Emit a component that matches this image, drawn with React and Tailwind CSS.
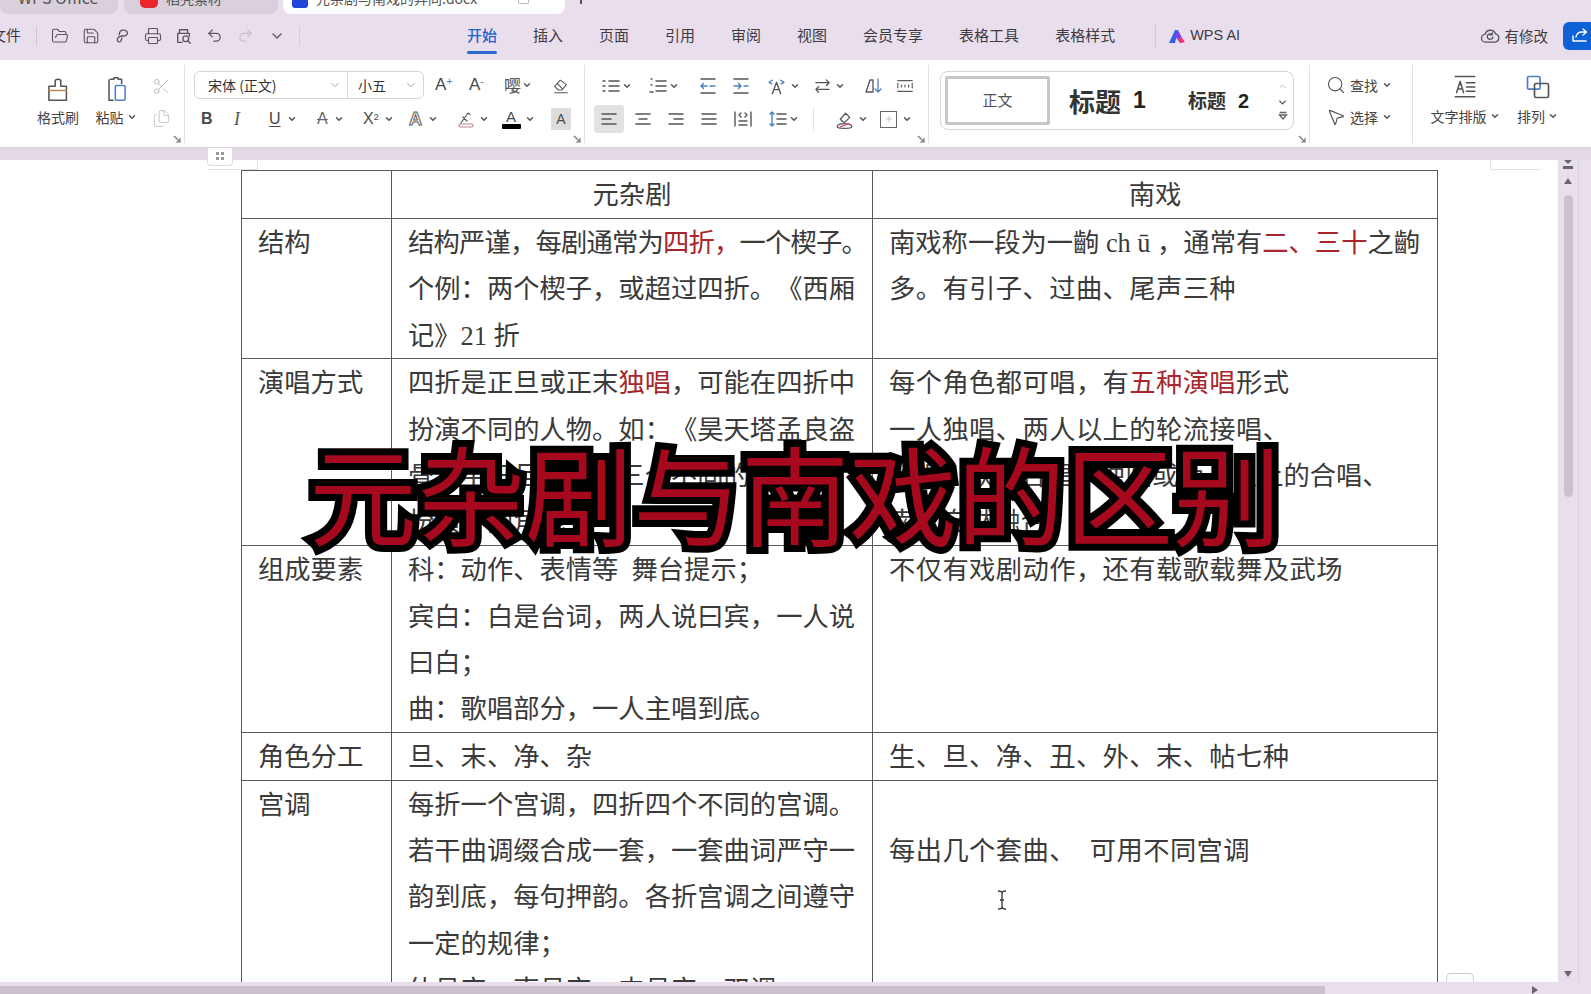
import React from "react";
import { ChevronDown, ChevronUp, FolderOpen, Save, Printer, Undo2, Redo2, Search, MousePointer2, Scissors, Files, Plus } from "lucide-react";

const Caret = ({ className = "ml-[3px]" }) => <ChevronDown size={10} strokeWidth={3.5} className={`${className} text-[#555] shrink-0`} />;

const Svg = ({ size = 20, children, stroke = "#555", sw = 1.4, className = "" }) => (
  <svg width={size} height={size} viewBox="0 0 20 20" fill="none" stroke={stroke} strokeWidth={sw} strokeLinecap="round" strokeLinejoin="round" className={className}>{children}</svg>
);

const Lines = ({ rows }) => (
  <Svg size={20} sw={1.5}>{rows.map(([a, b, y], i) => <path key={i} d={`M${a} ${y}H${b}`} />)}</Svg>
);

const Slot = ({ w, children }) => <div className={`flex items-center h-[24px] shrink-0 ${w}`}>{children}</div>;

const Launcher = () => (
  <svg width="8" height="8" viewBox="0 0 8 8" className="absolute right-[3px] bottom-[4px]" fill="none" stroke="#777" strokeWidth="1.2"><path d="M1 1l5.5 5.5M7 3v4H3" /></svg>
);

const Sep = () => <div className="w-px h-[78px] bg-[#e2e2e2] self-center" />;

const Red = ({ children }) => <span className="text-[#a8262c]">{children}</span>;

const Line = ({ children, t = "" }) => <div className={`whitespace-nowrap h-[46.4px] pt-[2px] leading-[46.4px] ${t}`}>{children}</div>;

const Cell = ({ children, center }) => (
  <td className={`border-[1.5px] border-[#5a5a5a] p-0 align-top overflow-hidden ${center ? "text-center" : "pl-[16px]"}`}>{children}</td>
);

const MenuIcon = ({ children }) => <div className="w-[31px] flex justify-center text-[#5b5560]">{children}</div>;

function TitleBar() {
  return (
    <div className="h-[17px] shrink-0 flex items-end overflow-hidden pb-[3px] gap-[6px] text-[#555]">
      <div className="w-[118px] h-[24px] -mt-[10px] bg-[#d9d0db] rounded-b-[8px] flex items-end pl-[18px] text-[16px] leading-none">
        <span className="-translate-y-[9px]">WPS Office</span>
      </div>
      <div className="w-[154px] h-[24px] bg-[#d9d0db] rounded-b-[8px] flex items-end pl-[16px] text-[14px] leading-none gap-[8px]">
        <div className="w-[18px] h-[8px] mb-[6px] bg-[#e8262c] rounded-b-[5px]" />
        <span className="-translate-y-[9px]">稻壳素材</span>
      </div>
      <div className="w-[282px] h-[24px] ml-[-1px] bg-white rounded-b-[8px] flex items-end pl-[9px] text-[14px] leading-none gap-[8px] pr-[36px]">
        <div className="w-[16px] h-[8px] mb-[6px] bg-[#1f45d8] rounded-b-[3px]" />
        <span className="-translate-y-[9px] grow">元杂剧与南戏的异同.docx</span>
        <div className="w-[11px] h-[4px] mb-[10px] border border-[#bbb] border-t-0 rounded-b-[2px]" />
      </div>
      <div className="w-[2px] h-[6px] ml-[9px] mb-[10px] bg-[#555]" />
    </div>
  );
}

function MenuBar() {
  return (
    <div className="h-[43px] shrink-0 flex items-center pb-[6px] text-[15px] text-[#3f3a42] relative">
      <span className="ml-[-9px] w-[36px]">文件</span>
      <div className="w-px h-[20px] bg-[#cfc6d2] ml-[9px] mr-[7px]" />
      <MenuIcon><FolderOpen size={18} strokeWidth={1.5} /></MenuIcon>
      <MenuIcon><Save size={18} strokeWidth={1.5} /></MenuIcon>
      <MenuIcon>
        <Svg size={18} stroke="#5b5560" sw={1.5}><path d="M7 8.5c0-3 1.5-5 4.500-5s4.500 1.500 4.500 3.200-1.500 3.300-5 3.300c-3 0-5 .8-6 3-.8 2 .3 3.500 1.800 3.500S9.500 15 9.800 12.500" /></Svg>
      </MenuIcon>
      <MenuIcon><Printer size={18} strokeWidth={1.5} /></MenuIcon>
      <MenuIcon>
        <Svg size={18} stroke="#5b5560" sw={1.5}><path d="M5 6V3h9v3M8 17H3V7h13v3" /><circle cx="12" cy="13" r="3.200" /><path d="M14.500 15.500L17 18" /></Svg>
      </MenuIcon>
      <MenuIcon><Undo2 size={17} strokeWidth={1.8} /></MenuIcon>
      <MenuIcon><Redo2 size={17} strokeWidth={1.5} className="text-[#c4bcc6]" /></MenuIcon>
      <MenuIcon><ChevronDown size={16} strokeWidth={2} /></MenuIcon>
      <div className="w-px h-[20px] bg-[#d6cdd8] ml-[7px]" />
      <div className="flex gap-[36px] ml-[167px]">
        <div className="relative text-[#2263cf] font-medium">开始<div className="absolute left-0 right-0 top-[27px] h-[3px] rounded-full bg-[#2b69cf]" /></div>
        {["插入", "页面", "引用", "审阅", "视图", "会员专享", "表格工具", "表格样式"].map((t) => <span key={t}>{t}</span>)}
      </div>
      <div className="w-px h-[24px] bg-[#d4cbd6] ml-[40px]" />
      <svg width="18" height="16" viewBox="0 0 18 16" className="ml-[12px]">
        <path d="M1 15L7 2h3l-3 13z" fill="#2f62e6" /><path d="M7 8l3-6 6 12-4 1z" fill="#7a3ff0" /><path d="M10 10l2 5 5-1-3-4z" fill="#f0386f" />
      </svg>
      <span className="ml-[4px] text-[14.500px] font-['Liberation_Sans',sans-serif]">WPS AI</span>
      <div className="ml-auto flex items-center">
        <Svg size={22} stroke="#555" sw={1.2}><path d="M6 15.500a3.500 3.500 0 0 1-.5-7A5 5 0 0 1 15 8a3.800 3.800 0 0 1-.5 7.500z" /><path d="M12.500 11a2.500 2.500 0 1 1-.8-2.300M12 7v2h-2" /></Svg>
        <span className="ml-[4px] text-[14.500px]">有修改</span>
        <div className="ml-[15px] w-[36px] h-[28px] bg-[#0f62d6] rounded-l-[6px] flex items-center pl-[7px] -mr-[8px]">
          <Svg size={20} stroke="#fff" sw={1.4}><path d="M3 10v5h13M6 11c.5-3 3-5 6-5h4M13 3l3.500 3-3.500 3" /></Svg>
        </div>
      </div>
    </div>
  );
}

function Ribbon() {
  const L = "font-['Liberation_Sans',sans-serif] text-[#4a4a4a]";
  return (
    <div className="h-[88px] shrink-0 bg-white flex border-b border-[#d8d0da] text-[14px] text-[#444]">
      {/* clipboard */}
      <div className="w-[184px] shrink-0 relative flex items-center pb-[8px]">
        <div className="ml-[35px] flex flex-col items-center w-[46px]">
          <Svg size={28} stroke="#555" sw={1.1}><path d="M8 8V4.500c0-2 4-2 4 0V8h4v10H3.500V8z" /><path d="M3.500 11h12.500" stroke="#b88a5a" /></Svg>
          <span className="mt-[7px] leading-none">格式刷</span>
        </div>
        <div className="ml-[11px] flex flex-col items-center w-[48px]">
          <Svg size={28} stroke="#555" sw={1.1}><path d="M6 3h2.500v-1h3v1H14v3M5 18V3.500M5 18h3" /><rect x="9.500" y="7.500" width="7" height="10.500" rx="1" stroke="#4a7fc0" /></Svg>
          <span className="mt-[7px] leading-none flex items-center">粘贴<Caret /></span>
        </div>
        <div className="ml-[12px] mt-[6px] flex flex-col items-center gap-[13px]">
          <Scissors size={19} strokeWidth={1.2} className="text-[#bdbdbd]" />
          <Files size={19} strokeWidth={1.2} className="text-[#c4c4c4]" />
        </div>
        <Launcher />
      </div>
      <Sep />
      {/* font */}
      <div className="w-[399px] shrink-0 relative pl-[9px] pt-[11px] flex flex-col gap-[8px]">
        <div className="flex items-center h-[28px]">
          <div className="flex w-[230px] h-[28px] border-[1.5px] border-[#d5d5d5] rounded-[6px] text-[14px] text-[#333] items-center">
            <div className="w-[153px] pl-[13px] flex items-center justify-between pr-[5px] h-full border-r-[1.5px] border-[#d5d5d5]"><span>宋体 (正文)</span><ChevronDown size={14} strokeWidth={1.5} className="text-[#999]" /></div>
            <div className="flex-1 pl-[10px] flex items-center justify-between pr-[5px]"><span>小五</span><ChevronDown size={14} strokeWidth={1.5} className="text-[#999]" /></div>
          </div>
          <Slot w="w-[34px] ml-[11px]"><span className={`${L} text-[17px] relative`}>A<sup className="text-[11px] text-[#5a7fb8]">+</sup></span></Slot>
          <Slot w="w-[35px]"><span className={`${L} text-[17px]`}>A<sup className="text-[11px] text-[#777]">-</sup></span></Slot>
          <Slot w="w-[48px]"><span className="text-[17px] text-[#555]">嘤</span><Caret className="ml-[1px]" /></Slot>
          <Slot w="w-[18px]"><Svg size={19} sw={1.2}><path d="M3 11l6-7 7 5-5 6H7zM6 8l6 6M3 18h14" /></Svg></Slot>
        </div>
        <div className="flex items-center pl-[4px]">
          <Slot w="w-[33px]"><span className={`${L} text-[16px] font-bold ml-[3px]`}>B</span></Slot>
          <Slot w="w-[35px]"><span className="font-['Liberation_Serif',serif] italic text-[18px] ml-[3px] text-[#555]">I</span></Slot>
          <Slot w="w-[48px]"><span className={`${L} text-[16px] underline underline-offset-2 ml-[3px]`}>U</span><Caret className="ml-[6px]" /></Slot>
          <Slot w="w-[47px]"><span className={`${L} text-[16px] line-through text-[#666] ml-[3px]`}>A</span><Caret className="ml-[6px]" /></Slot>
          <Slot w="w-[47px]"><span className={`${L} text-[16px] ml-[2px]`}>X<sup className="text-[9px]">2</sup></span><Caret className="ml-[5px]" /></Slot>
          <Slot w="w-[48px]"><span className="font-['Liberation_Sans',sans-serif] font-bold text-[18px] text-[#f4eeea] [-webkit-text-stroke:1px_#666] ml-[1px]">A</span><Caret className="ml-[6px]" /></Slot>
          <Slot w="w-[45px]">
            <Svg size={20} sw={1.2}><path d="M5 14L12 4l2 1.500M7 8l4 4" /><rect x="3" y="15" width="14" height="3" rx="1.500" stroke="#c08585" /></Svg><Caret className="ml-[3px]" />
          </Slot>
          <Slot w="w-[50px]">
            <div className="flex flex-col items-center w-[20px] leading-none"><span className={`${L} text-[15px] leading-[15px]`}>A</span><div className="w-[19px] h-[5px] bg-black rounded-[1px]" /></div><Caret className="ml-[4px]" />
          </Slot>
          <Slot w="w-[20px]"><div className={`w-[20px] h-[22px] bg-[#dcdcdc] flex items-center justify-center ${L} text-[14px]`}>A</div></Slot>
        </div>
        <Launcher />
      </div>
      <Sep />
      {/* paragraph */}
      <div className="w-[343px] shrink-0 relative pl-[16px] pt-[14px] flex flex-col gap-[9px]">
        <div className="flex items-center">
          <Slot w="w-[47px]"><Lines rows={[[8, 18, 5], [8, 18, 10], [8, 18, 15], [2, 4, 5], [2, 4, 10], [2, 4, 15]]} /><Caret className="ml-[1px]" /></Slot>
          <Slot w="w-[50px]"><Lines rows={[[8, 18, 5], [8, 18, 10], [8, 18, 15], [3, 4, 3], [3, 4, 9], [2, 5, 16]]} /><Caret className="ml-[1px]" /></Slot>
          <Slot w="w-[33px]"><Svg size={20} sw={1.4}><path d="M3 3h14M3 17h14" /><path d="M9 10H3M5.500 7.500L3 10l2.500 2.500M12 10h5" stroke="#4a7fc0" /></Svg></Slot>
          <Slot w="w-[35px]"><Svg size={20} sw={1.4}><path d="M3 3h14M3 17h14" /><path d="M3 10h7M7.500 7.500L10 10l-2.500 2.500M13 10h4" stroke="#4a7fc0" /></Svg></Slot>
          <Slot w="w-[47px]"><Svg size={21} sw={1.3}><path d="M6 17l4-11 4 11M7.500 13h5" /><path d="M3 6l3-2M3 6l2.500 1.500M17 6l-3-2M17 6l-2.500 1.500" stroke="#4a7fc0" /></Svg><Caret className="ml-[3px]" /></Slot>
          <Slot w="w-[51px]"><Svg size={19} sw={1.3}><path d="M3 6h14M14 3l3 3-3 3M17 13H3M6 10l-3 3 3 3" /></Svg><Caret className="ml-[3px]" /></Slot>
          <Slot w="w-[32px]"><Svg size={20} sw={1.3}><path d="M2 16L6 4h3v12H2" /><path d="M14 3v13M11 13l3 3 3-3" stroke="#4a7fc0" /></Svg></Slot>
          <Slot w="w-[18px]"><Svg size={20} sw={1.3}><path d="M2 4h16M2 16h16M2 7v6M18 7v6M6 9v2M10 9v2M14 9v2" strokeDasharray="2 1" /></Svg></Slot>
        </div>
        <div className="flex items-center -ml-[7px]">
          <div className="w-[30px] h-[28px] -my-[2px] rounded-[4px] bg-[#e2e2e2] flex items-center justify-center mr-[9px]"><Lines rows={[[3, 17, 5], [3, 12, 10], [3, 17, 15]]} /></div>
          <Slot w="w-[33px]"><Lines rows={[[3, 17, 5], [6, 14, 10], [3, 17, 15]]} /></Slot>
          <Slot w="w-[33px]"><Lines rows={[[3, 17, 5], [8, 17, 10], [3, 17, 15]]} /></Slot>
          <Slot w="w-[34px]"><Lines rows={[[3, 17, 5], [3, 17, 10], [3, 17, 15]]} /></Slot>
          <Slot w="w-[35px]"><Svg size={20} sw={1.4}><path d="M2 3v14M18 3v14M6 12h8M6 16h8M8 4L6 6l2 2M12 4l2 2-2 2" /></Svg></Slot>
          <Slot w="w-[45px]"><Svg size={20} sw={1.4}><path d="M4 3v14M2 5l2-2 2 2M2 15l2 2 2-2" stroke="#4a7fc0" /><path d="M9 5h9M9 10h9M9 15h9" /></Svg><Caret className="ml-[1px]" /></Slot>
          <div className="w-px h-[22px] bg-[#e2e2e2] mr-[20px]" />
          <Slot w="w-[46px]"><Svg size={21} sw={1.2}><path d="M6 10l5-6 4 4-5 5zM3 17c0-2 3-3 7-3s7 1 7 3-14 2-14 0z" /><path d="M6 17l8-3" stroke="#d0506a" /></Svg><Caret className="ml-[3px]" /></Slot>
          <Slot w="w-[20px]"><div className="w-[17px] h-[17px] border-[1.5px] border-[#666] flex items-center justify-center shrink-0"><Plus size={10} className="text-[#bbb]" /></div><Caret className="ml-[5px]" /></Slot>
        </div>
        <Launcher />
      </div>
      <Sep />
      {/* styles */}
      <div className="w-[380px] shrink-0 relative pl-[11px] pt-[11px]">
        <div className="w-[354px] h-[59px] border-[1.5px] border-[#d5d5d5] rounded-[8px] flex items-center pl-[4px] pr-[3px]">
          <div className="w-[105px] h-[49px] border-[3px] border-[#c6c6c6] rounded-[2px] flex items-center justify-center text-[15px] text-[#555]">正文</div>
          <div className="ml-[19px] flex items-center text-[26px] font-bold text-[#333] w-[119px]">标题<span className="font-['Liberation_Sans',sans-serif] text-[23px] ml-[12px] text-[#222]">1</span></div>
          <div className="flex items-center text-[19px] font-bold text-[#333]">标题<span className="font-['Liberation_Sans',sans-serif] text-[20px] ml-[12px] text-[#222]">2</span></div>
          <div className="ml-auto flex flex-col items-center gap-[3px] pr-[2px]">
            <ChevronUp size={11} strokeWidth={2} className="text-[#bbb]" />
            <ChevronDown size={11} strokeWidth={3} className="text-[#555] mt-[2px]" />
            <svg width="10" height="10" viewBox="0 0 10 10" fill="none" stroke="#666" strokeWidth="1.300"><path d="M1.500 1.500h7M1.500 4l3.500 4 3.500-4z" /></svg>
          </div>
        </div>
        <Launcher />
      </div>
      <Sep />
      {/* find */}
      <div className="w-[102px] shrink-0 pl-[16px] pb-[5px] flex flex-col justify-center gap-[10px]">
        <div className="flex items-center h-[22px]"><Search size={20} strokeWidth={1.4} className="text-[#555]" /><span className="ml-[4px]">查找</span><Caret className="ml-[4px]" /></div>
        <div className="flex items-center h-[22px]"><MousePointer2 size={20} strokeWidth={1.4} className="text-[#555]" /><span className="ml-[4px]">选择</span><Caret className="ml-[4px]" /></div>
      </div>
      <Sep />
      {/* arrange */}
      <div className="flex-1 flex items-center pl-[13px] pb-[11px]">
        <div className="flex flex-col items-center w-[78px]">
          <Svg size={28} sw={1.100}><path d="M3 2.500h14M3 17h14M4 14l2.500-8 2.500 8M5 11.500h3M11 7h6M11 10h6M11 13h6" /></Svg>
          <span className="mt-[8px] leading-none flex items-center">文字排版<Caret /></span>
        </div>
        <div className="ml-[13px] flex flex-col items-center">
          <Svg size={28} sw={1.200}><rect x="2.500" y="2.500" width="9" height="9" rx="1" stroke="#4a7fc0" /><rect x="7.500" y="7.500" width="10" height="10" rx="1" /></Svg>
          <span className="mt-[8px] leading-none flex items-center">排列<Caret /></span>
        </div>
      </div>
    </div>
  );
}

function Doc() {
  const w = "tracking-[0.4px]";
  return (
    <div className="flex-1 min-h-0 flex overflow-hidden">
      <div className="w-[1558px] shrink-0 bg-white relative overflow-hidden pl-[241px] pt-[10px] font-['Liberation_Serif','Noto_Sans_CJK_SC',serif] text-[26.300px] text-[#3a3a3a] [text-spacing-trim:space-all]">
        <table className="table-fixed border-collapse w-[1196px]">
          <colgroup><col className="w-[150px]" /><col className="w-[481px]" /><col className="w-[565px]" /></colgroup>
          <tbody>
            <tr className="h-[48px]">
              <Cell />
              <Cell center><Line>元杂剧</Line></Cell>
              <Cell center><Line>南戏</Line></Cell>
            </tr>
            <tr className="h-[140px]">
              <Cell><Line>结构</Line></Cell>
              <Cell>
                <Line t="tracking-[-0.8px]">结构严谨，每剧通常为<Red>四折，</Red>一个楔子。</Line>
                <Line>个例：两个楔子，或超过四折。《西厢</Line>
                <Line>记》21 折</Line>
              </Cell>
              <Cell>
                <Line>南戏称一段为一齣 ch ū ，通常有<Red>二、三十</Red>之齣</Line>
                <Line t={w}>多。有引子、过曲、尾声三种</Line>
              </Cell>
            </tr>
            <tr className="h-[187px]">
              <Cell><Line>演唱方式</Line></Cell>
              <Cell>
                <Line>四折是正旦或正末<Red>独唱</Red>，可能在四折中</Line>
                <Line>扮演不同的人物。如：《昊天塔孟良盗</Line>
                <Line>骨》中正旦扮演了三个不同的人物、</Line>
                <Line>扮演不同角色</Line>
              </Cell>
              <Cell>
                <Line t={w}>每个角色都可唱，有<Red>五种演唱</Red>形式</Line>
                <Line t={w}>一人独唱、两人以上的轮流接唱、</Line>
                <Line>对唱、众人合唱、独唱或两人以上的合唱、</Line>
                <Line>南北自然融合</Line>
              </Cell>
            </tr>
            <tr className="h-[187px]">
              <Cell><Line>组成要素</Line></Cell>
              <Cell>
                <Line>科：动作、表情等&nbsp;&nbsp;舞台提示；</Line>
                <Line>宾白：白是台词，两人说曰宾，一人说</Line>
                <Line>曰白；</Line>
                <Line>曲：歌唱部分，一人主唱到底。</Line>
              </Cell>
              <Cell><Line t={w}>不仅有戏剧动作，还有载歌载舞及武场</Line></Cell>
            </tr>
            <tr className="h-[47px]">
              <Cell><Line>角色分工</Line></Cell>
              <Cell><Line>旦、末、净、杂</Line></Cell>
              <Cell><Line t={w}>生、旦、净、丑、外、末、帖七种</Line></Cell>
            </tr>
            <tr className="h-[232px]">
              <Cell><Line>宫调</Line></Cell>
              <Cell>
                <Line>每折一个宫调，四折四个不同的宫调。</Line>
                <Line>若干曲调缀合成一套，一套曲词严守一</Line>
                <Line>韵到底，每句押韵。各折宫调之间遵守</Line>
                <Line>一定的规律；</Line>
                <Line>仙吕宫、南吕宫、中吕宫、双调</Line>
              </Cell>
              <Cell>
                <Line />
                <Line t={w}>每出几个套曲、&nbsp;&nbsp;可用不同宫调</Line>
              </Cell>
            </tr>
          </tbody>
        </table>
        <div className="absolute left-[207px] top-0 w-[51px] h-[10px] border-r border-b border-[#e3e3e3]" />
        <div className="absolute left-[1490px] top-0 w-[51px] h-[10px] border-l border-b border-[#e3e3e3]" />
        <svg width="16" height="22" viewBox="0 0 16 22" className="absolute left-[994px] top-[729px]" fill="none" stroke="#333" strokeWidth="1.300"><path d="M4 2c2 0 4 .5 4 2v14c0 1.500-2 2-4 2M12 2c-2 0-4 .5-4 2v14c0 1.500 2 2 4 2M6 11h4" /></svg>
        <div className="absolute left-[1446px] bottom-0 w-[28px] h-[9px] border border-b-0 border-[#ccc] rounded-t-[5px]" />
      </div>
      <div className="w-[20px] shrink-0 flex flex-col items-center pt-[0px]">
        <svg width="10" height="9" viewBox="0 0 10 9" fill="#666"><path d="M1 0h8L5 4zM0 6h10v3H0z" /></svg>
        <svg width="8" height="6" viewBox="0 0 8 6" fill="#666" className="mt-[9px]"><path d="M4 0l4 6H0z" /></svg>
        <div className="w-[9px] h-[302px] rounded-full bg-[#cbc0cd] mt-[11px]" />
        <div className="grow" />
        <svg width="8" height="6" viewBox="0 0 8 6" fill="#666" className="mb-[5px]"><path d="M4 6l4-6H0z" /></svg>
      </div>
      <div className="flex-1 border-l border-[#d8cfda]" />
    </div>
  );
}

export default function App() {
  return (
    <div className="w-[1591px] h-[994px] overflow-hidden relative flex flex-col bg-[#e9dfec] font-['Noto_Sans_CJK_SC','Liberation_Sans',sans-serif]">
      <TitleBar />
      <MenuBar />
      <Ribbon />
      <div className="h-[12px] shrink-0 bg-[#e4dae6] relative z-10">
        <div className="absolute left-[207px] top-0 w-[26px] h-[18px] bg-white border border-t-0 border-[#ddd] rounded-b-[4px] grid grid-cols-2 gap-[2px] px-[8px] py-[4px] content-start">
          <div className="w-[3px] h-[3px] bg-[#999]" /><div className="w-[3px] h-[3px] bg-[#999]" />
          <div className="w-[3px] h-[3px] bg-[#999]" /><div className="w-[3px] h-[3px] bg-[#999]" />
        </div>
      </div>
      <Doc />
      <div className="h-[12px] shrink-0 bg-[#e9dfec] flex items-end relative">
        <div className="w-[1325px] h-[8px] bg-[#cbc0cd]" />
        <svg width="6" height="8" viewBox="0 0 6 8" fill="#666" className="ml-[207px]"><path d="M0 0l6 4-6 4z" /></svg>
      </div>
      <div className="absolute left-[795px] top-[491px] -translate-x-1/2 -translate-y-1/2 whitespace-nowrap text-[108px] leading-none font-normal text-[#a6081d] [-webkit-text-stroke:14px_#000] [paint-order:stroke_fill] font-['Noto_Sans_CJK_SC',sans-serif]">
        元杂剧与南戏的区别
      </div>
    </div>
  );
}
